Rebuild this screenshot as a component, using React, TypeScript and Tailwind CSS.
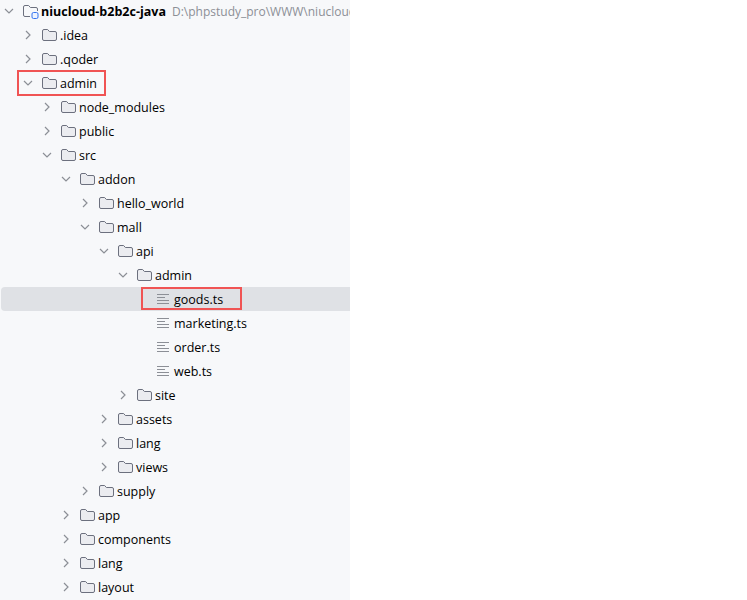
const TREE: { name: string; depth: number; kind: 'open' | 'closed' | 'file' }[] = [
  { name: '.idea', depth: 1, kind: 'closed' },
  { name: '.qoder', depth: 1, kind: 'closed' },
  { name: 'admin', depth: 1, kind: 'open' },
  { name: 'node_modules', depth: 2, kind: 'closed' },
  { name: 'public', depth: 2, kind: 'closed' },
  { name: 'src', depth: 2, kind: 'open' },
  { name: 'addon', depth: 3, kind: 'open' },
  { name: 'hello_world', depth: 4, kind: 'closed' },
  { name: 'mall', depth: 4, kind: 'open' },
  { name: 'api', depth: 5, kind: 'open' },
  { name: 'admin', depth: 6, kind: 'open' },
  { name: 'goods.ts', depth: 7, kind: 'file' },
  { name: 'marketing.ts', depth: 7, kind: 'file' },
  { name: 'order.ts', depth: 7, kind: 'file' },
  { name: 'web.ts', depth: 7, kind: 'file' },
  { name: 'site', depth: 6, kind: 'closed' },
  { name: 'assets', depth: 5, kind: 'closed' },
  { name: 'lang', depth: 5, kind: 'closed' },
  { name: 'views', depth: 5, kind: 'closed' },
  { name: 'supply', depth: 4, kind: 'closed' },
  { name: 'app', depth: 3, kind: 'closed' },
  { name: 'components', depth: 3, kind: 'closed' },
  { name: 'lang', depth: 3, kind: 'closed' },
  { name: 'layout', depth: 3, kind: 'closed' },
];

function Chevron({ open }: { open: boolean }) {
  return (
    <svg width="12" height="12" viewBox="0 0 12 12" fill="none" stroke="#8c8f96" strokeWidth="1.2" className="shrink-0">
      <path d={open ? 'M2 4l4 4 4-4' : 'M4 2l4 4-4 4'} />
    </svg>
  );
}

function FolderIcon() {
  return (
    <svg width="15" height="14" viewBox="0 0 15 14" className="shrink-0">
      <path
        d="M0.5 3A1.5 1.5 0 0 1 2 1.5h3.6l1.8 2h5.6A1.5 1.5 0 0 1 14.5 5v6a1.5 1.5 0 0 1-1.5 1.5H2A1.5 1.5 0 0 1 0.5 11z"
        fill="#ebecf0"
        stroke="#6c707e"
        strokeWidth="1"
      />
    </svg>
  );
}

function ModuleFolderIcon() {
  return (
    <svg width="16" height="15" viewBox="0 0 16 15" className="shrink-0">
      <path
        d="M7 12.5H2A1.5 1.5 0 0 1 0.5 11V3A1.5 1.5 0 0 1 2 1.5h3.6l1.8 2h5.6A1.5 1.5 0 0 1 14.5 5v2"
        fill="none"
        stroke="#6c707e"
        strokeWidth="1"
      />
      <rect x="9" y="8.5" width="6" height="6" rx="1.5" fill="#edf3ff" stroke="#3574f0" strokeWidth="1" />
    </svg>
  );
}

function TextFileIcon() {
  return (
    <svg width="13" height="12" viewBox="0 0 13 12" stroke="#8c8f96" strokeWidth="1" className="shrink-0">
      <path d="M0 1.5h12M0 4.5h8M0 7.5h12M0 10.5h12" />
    </svg>
  );
}

function Row({ name, depth, kind }: { name: string; depth: number; kind: 'open' | 'closed' | 'file' }) {
  const selected = name === 'goods.ts';
  const boxed = selected || (name === 'admin' && depth === 1);
  const left = depth * 19;
  return (
    <div className={`relative flex h-6 items-center ${selected ? 'ml-px rounded-l bg-[#dfe1e5]' : ''}`}>
      <div className="flex items-center" style={{ paddingLeft: selected ? left - 1 : left }}>
        {kind === 'file' ? (
          <div className="ml-[24px] mr-[4px] flex w-[13px] justify-center">
            <TextFileIcon />
          </div>
        ) : (
          <>
            <div className="ml-[3px] mr-[8px] flex w-3">
              <Chevron open={kind === 'open'} />
            </div>
            <div className="mr-[3px]">
              <FolderIcon />
            </div>
          </>
        )}
        <span className="whitespace-nowrap pt-[2px] text-[12.5px] text-black">{name}</span>
      </div>
      {boxed && selected && (
        <div className="absolute left-[140px] top-0 h-[23px] w-[101px] border-2 border-[#f05454]" />
      )}
      {boxed && !selected && (
        <div className="absolute left-[17px] top-[-1px] h-[26px] w-[89px] border-2 border-[#f05454]" />
      )}
    </div>
  );
}

export default function App() {
  return (
    <div className="h-[600px] w-[747px] overflow-hidden bg-white font-['Open_Sans','Noto_Sans',sans-serif]">
      <div className="h-full w-[350px] overflow-hidden bg-[#f7f8fa]">
        <div className="mt-[-1px] flex h-6 items-center pl-[3px]">
          <div className="mr-[8px] w-3">
            <Chevron open />
          </div>
          <div className="mr-[2px]">
            <ModuleFolderIcon />
          </div>
          <span className="whitespace-nowrap pt-[2px] text-[12.5px] font-bold text-black">niucloud-b2b2c-java</span>
          <span className="ml-[6px] whitespace-nowrap pt-[2px] text-[12px] text-[#8c8f96]">D:\phpstudy_pro\WWW\niucloud-b2b2c-java</span>
        </div>
        {TREE.map((item, i) => (
          <Row key={i} {...item} />
        ))}
      </div>
    </div>
  );
}
